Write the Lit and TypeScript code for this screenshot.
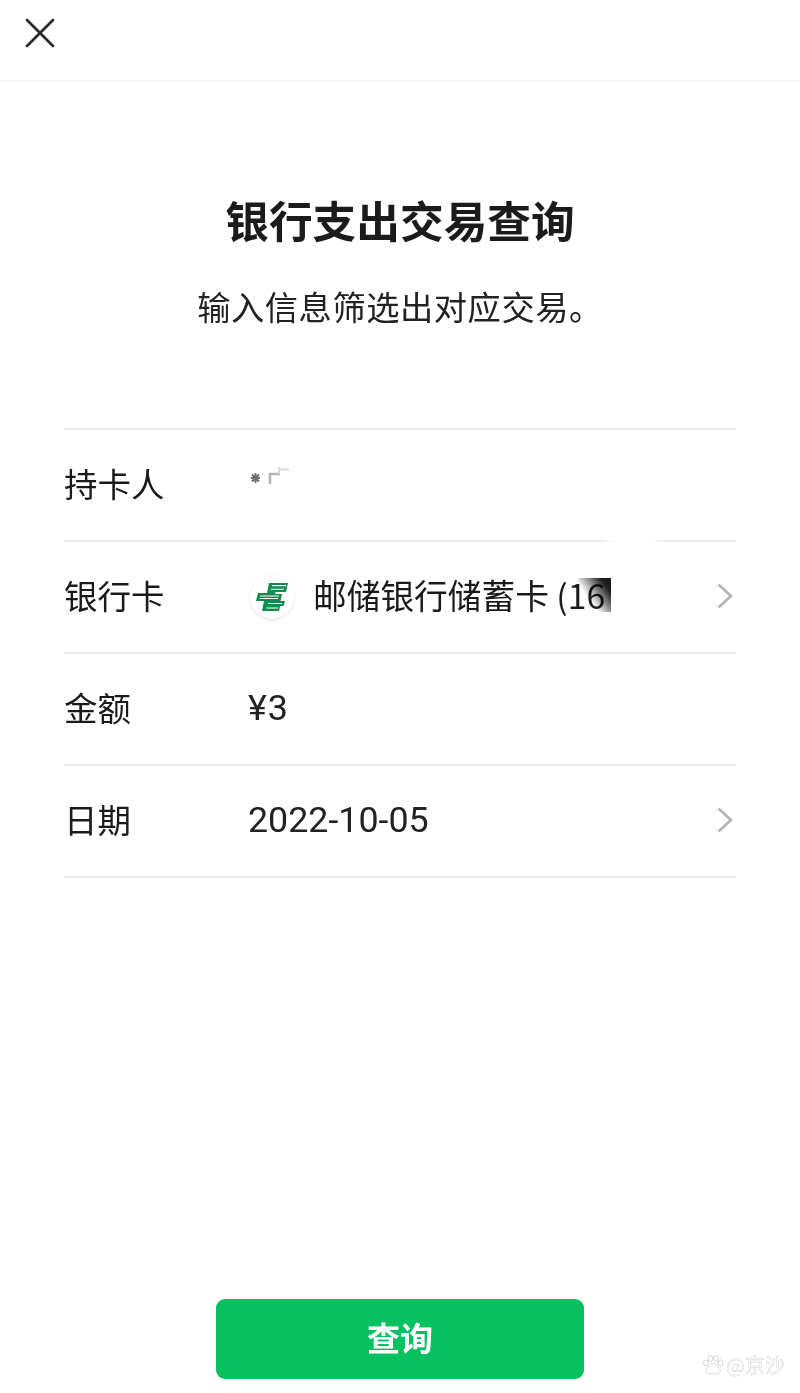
import { LitElement, html, css } from "lit";
import { customElement } from "lit/decorators.js";

const chevron = html`<svg class="chev" width="18" height="26" viewBox="0 0 18 26"><path d="M2.5 1.5 L15 13 L2.5 24.500" fill="none" stroke="#b4b4b4" stroke-width="2.6"/></svg>`;

@customElement("app-root")
export class AppRoot extends LitElement {
  static styles = css`
    :host { display: block; width: 800px; height: 1393px; background: #fff; color: #1a1a1a;
      font-family: "Noto Sans CJK SC", "Noto Sans", sans-serif; overflow: hidden; position: relative; }
    .page { display: flex; flex-direction: column; height: 1393px; box-sizing: border-box; }
    .top { height: 81px; flex: none; box-sizing: border-box; border-bottom: 1px solid #f3f3f3; padding: 18px 0 0 25px; }
    .top svg { display: block; }
    h1 { margin: 105px 0 0; text-align: center; font-size: 43.7px; line-height: 66px; font-weight: 700; color: #1b1b1b; }
    .sub { margin: 29px 0 0; text-align: center; font-size: 33.3px; line-height: 50px; font-weight: 400; color: #222; letter-spacing: .5px; }
    .list { margin: 97px 64px 0; border-top: 2px solid #ebebeb; }
    .row { height: 110px; border-bottom: 2px solid #ebebeb; display: flex; align-items: center; font-size: 33.5px; position: relative; }
    .label { width: 184px; flex: none; color: #1a1a1a; padding-bottom: 5px; }
    .value { flex: 1; display: flex; align-items: center; color: #1a1a1a; }
    .num { font-family: "Roboto", "Inter", sans-serif; font-size: 35.8px; padding-bottom: 2px; color: #222; }
    .amount { letter-spacing: 1px; }
    .logo { width: 44px; height: 44px; border-radius: 50%; margin: 0 19px 0 2px; flex: none; background: #fff;
      box-shadow: 0 1px 3px rgba(0,0,0,.12); display: flex; align-items: center; justify-content: center; }
    .card { white-space: nowrap; font-size: 33.7px; padding-bottom: 5px; }
    .mask-box { position: absolute; left: 578px; top: 578px; width: 33px; height: 34px; mix-blend-mode: multiply;
      background: linear-gradient(55deg, rgba(255,255,255,0) 35%, #1d1d1d 82%); }
    .erase { position: absolute; left: 600px; top: 540px; width: 66px; height: 4px;
      background: linear-gradient(90deg, rgba(255,255,255,0), #fff 25%, #fff 75%, rgba(255,255,255,0)); }
    .chev { position: absolute; right: 2px; top: 41px; }
    .masked { position: absolute; left: 184px; top: 35px; }
    .foot { margin-top: auto; padding-bottom: 14px; display: flex; justify-content: center; }
    button { width: 368px; height: 80px; border: 0; border-radius: 9px; background: #07c160; color: #fff;
      font: 700 33px "Noto Sans CJK SC", sans-serif; padding: 0 0 5px; }
    .wm { position: absolute; right: 15px; bottom: 16px; display: flex; align-items: center; gap: 0;
      font-size: 20px; line-height: 24px; color: #fff; -webkit-text-stroke: 0.5px #d4d4d4; }
    .wm svg { margin-right: 1px; }
  `;
  render() {
    return html`<div class="page">
      <div class="top"><svg width="30" height="30" viewBox="0 0 30 30"><path d="M2 2 L28 28 M28 2 L2 28" stroke="#2b2b2b" stroke-width="2.800" fill="none" stroke-linecap="round"/></svg></div>
      <h1>银行支出交易查询</h1>
      <p class="sub">输入信息筛选出对应交易。</p>
      <div class="list">
        <div class="row"><span class="label">持卡人</span>
          <svg class="masked" width="44" height="24" viewBox="0 0 44 24"><path d="M3 13h9M7.500 8v10M4 9.500l7 7M11 9.500l-7 7" stroke="#6f6f6f" stroke-width="2" fill="none"/><path d="M22 19V9h10" stroke="#b5b5b5" stroke-width="2.500" fill="none"/><path d="M31 9V2M31 4.500h10" stroke="#d8d8d8" stroke-width="2" fill="none"/></svg>
        </div>
        <div class="row"><span class="label">银行卡</span>
          <span class="value"><span class="logo">
            <svg width="32" height="30" viewBox="0 0 32 30"><path fill="#128c4c" d="M13 1H32L30 10H19.500L19 12H26L24.500 19H29L27.500 24H24L23 29H6L8 19H0L2 11H11z"/><path d="M16 3.600H30M15 7.200H28M4 14H23M3.500 16.500H22M12 21.500H26M10.500 26H22" stroke="#fff" stroke-width="1.100" fill="none"/></svg>
          </span><span class="card">邮储银行储蓄卡 (16</span></span>${chevron}
        </div>
        <div class="row"><span class="label">金额</span><span class="value num amount">¥3</span></div>
        <div class="row"><span class="label">日期</span><span class="value num">2022-10-05</span>${chevron}</div>
      </div>
      <div class="foot"><button>查询</button></div>
    </div>
    <div class="mask-box"></div>
    <div class="erase"></div>
    <div class="wm"><svg width="24" height="22" viewBox="0 0 22 22" fill="#fff" stroke="#d4d4d4" stroke-width="1"><ellipse cx="4" cy="9" rx="2.500" ry="3.200"/><ellipse cx="8.500" cy="4.500" rx="2.300" ry="3"/><ellipse cx="14" cy="4.500" rx="2.300" ry="3"/><ellipse cx="18.500" cy="9" rx="2.500" ry="3.200"/><path d="M11 9c-3 0-4 4-6.500 6-2 2 0 5 3 5 2 0 2.500-.6 3.500-.6s1.500.6 3.500.6c3 0 5-3 3-5C15 13 14 9 11 9z"/></svg><span>@京沙</span></div>`;
  }
}
